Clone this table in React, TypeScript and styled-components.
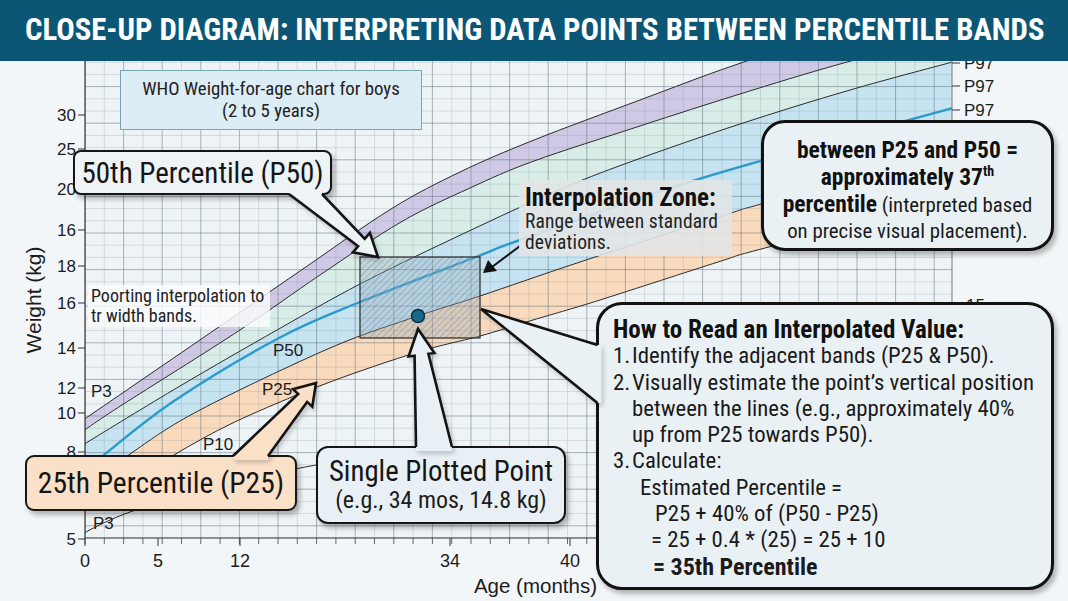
import React from "react";
import styled, { createGlobalStyle, css } from "styled-components";

const NARROW = `"Liberation Sans Narrow", "Roboto Condensed", "DejaVu Sans Condensed", "Liberation Sans", Arial, sans-serif`;
const PLAIN = `"Liberation Sans", Arial, sans-serif`;

// the chart area starts right under the header, svg coords are page coords
const TOP = 61;

type Pt = [number, number];

const GlobalStyle = createGlobalStyle`
    html, body {
        margin: 0;
        padding: 0;
    }
    body {
        background: #f3f6f8;
        font-family: ${NARROW};
        color: #1c1c1c;
    }
`;

// percentile curves, left to right
const curves: Record<string, Pt[]> = {
    l1: [[70, 429], [86, 418], [213, 331], [300, 271], [391, 209], [460, 172], [534, 140], [640, 100], [735, 65], [850, 28], [960, -5]],
    l2: [[70, 440], [86, 429], [122, 405], [240, 330], [320, 275], [401, 222], [470, 188], [534, 161], [640, 126], [740, 94], [840, 64], [960, 32]],
    l3: [[70, 453], [86, 443], [180, 386], [277, 330], [360, 284], [450, 240], [554, 192], [630, 162], [740, 124], [850, 90], [960, 60]],
    p50: [[70, 482], [100, 458], [174, 401], [279, 338], [360, 302], [476, 257], [520, 240], [677, 186], [800, 150], [960, 106]],
    l5: [[70, 500], [133, 452], [200, 410], [330, 348], [418, 316], [480, 296], [580, 262], [728, 214], [765, 203], [960, 150]],
    l6: [[100, 505], [150, 470], [200, 440], [250, 415], [330, 382], [418, 352], [480, 336], [533, 320], [600, 300], [718, 262], [765, 248], [960, 198]],
    l7: [[70, 545], [86, 532], [130, 512], [200, 491], [300, 468], [400, 452]],
};

const segments = (pts: Pt[]) => {
    let d = "";
    for (let i = 0; i < pts.length - 1; i++) {
        const p0 = pts[i - 1] || pts[i];
        const p1 = pts[i];
        const p2 = pts[i + 1];
        const p3 = pts[i + 2] || p2;
        const c1 = [p1[0] + (p2[0] - p0[0]) / 6, p1[1] + (p2[1] - p0[1]) / 6];
        const c2 = [p2[0] - (p3[0] - p1[0]) / 6, p2[1] - (p3[1] - p1[1]) / 6];
        d += ` C${c1[0].toFixed(1)},${c1[1].toFixed(1)} ${c2[0].toFixed(1)},${c2[1].toFixed(1)} ${p2[0]},${p2[1]}`;
    }
    return d;
};

const linePath = (pts: Pt[]) => `M${pts[0][0]},${pts[0][1]}${segments(pts)}`;

const bandPath = (upper: Pt[], lower: Pt[]) => {
    const back = [...lower].reverse();
    return `${linePath(upper)} L${back[0][0]},${back[0][1]}${segments(back)} Z`;
};

// hollow block arrow from a callout edge (b1..b2) to the tip
const arrowPoints = (b1: Pt, b2: Pt, tip: Pt, neck: number, head: number, len: number): Pt[] => {
    if (len === 0) return [b1, tip, b2];
    const mx = (b1[0] + b2[0]) / 2;
    const my = (b1[1] + b2[1]) / 2;
    const L = Math.hypot(tip[0] - mx, tip[1] - my);
    const ux = (tip[0] - mx) / L;
    const uy = (tip[1] - my) / L;
    const nx = -uy;
    const ny = ux;
    const side = Math.sign((b1[0] - mx) * nx + (b1[1] - my) * ny) || 1;
    const cx = tip[0] - ux * len;
    const cy = tip[1] - uy * len;
    const at = (s: number, w: number): Pt => [cx + nx * w * s, cy + ny * w * s];
    return [b1, at(side, neck), at(side, head), tip, at(-side, head), at(-side, neck), b2];
};

const toStr = (pts: Pt[]) => pts.map((p) => `${p[0].toFixed(1)},${p[1].toFixed(1)}`).join(" ");

const yTicks: [string, number][] = [
    ["30", 115], ["25", 149], ["20", 189], ["16", 230], ["18", 266], ["16", 303],
    ["14", 348], ["12", 388], ["10", 413], ["8", 452], ["5", 539],
];

const xTicks: [string, number][] = [["0", 85], ["5", 158], ["12", 240], ["34", 450], ["40", 570]];

const GrowthChart = () => {
    const verticals: { x: number; major: boolean }[] = [];
    for (let i = 0, x = 85; x <= 952; i++, x = 85 + i * 19.3) verticals.push({ x, major: i % 2 === 0 });
    const horizontals: { y: number; major: boolean }[] = [];
    for (let i = 0, y = 538; y >= 61; i++, y = 538 - i * 12.2) horizontals.push({ y, major: i % 3 === 1 });
    const xMinor: number[] = [];
    for (let x = 85; x <= 590; x += 19.3) xMinor.push(x);

    return (
        <Plot viewBox={`0 ${TOP} 1068 540`}>
            <defs>
                <clipPath id="plot-clip">
                    <rect x={85} y={TOP} width={867} height={538 - TOP} />
                </clipPath>
                <pattern id="hatch" width="4.5" height="4.5" patternUnits="userSpaceOnUse" patternTransform="rotate(45)">
                    <line x1="0" y1="0" x2="0" y2="4.5" stroke="rgba(55,75,90,0.45)" strokeWidth="1" />
                </pattern>
            </defs>

            <rect x={85} y={TOP} width={867} height={538 - TOP} fill="#eef3f6" />
            <g clipPath="url(#plot-clip)">
                <path d={bandPath(curves.l1, curves.l2)} fill="#cfc9e5" />
                <path d={bandPath(curves.l2, curves.l3)} fill="#d9ede8" />
                <path d={bandPath(curves.l3, curves.l5)} fill="#c6e3f1" />
                <path d={bandPath(curves.l5, curves.l6)} fill="#f9dabd" />

                {verticals.map((v, i) => (
                    <line key={`v${i}`} x1={v.x} y1={TOP} x2={v.x} y2={538}
                        stroke={v.major ? "#5e707a" : "#7d8f99"} strokeOpacity={v.major ? 0.5 : 0.3} strokeWidth={v.major ? 1 : 0.8} />
                ))}
                {horizontals.map((h, i) => (
                    <line key={`h${i}`} x1={85} y1={h.y} x2={952} y2={h.y}
                        stroke={h.major ? "#5e707a" : "#7d8f99"} strokeOpacity={h.major ? 0.5 : 0.3} strokeWidth={h.major ? 1 : 0.8} />
                ))}

                {["l1", "l2", "l3", "l5", "l6", "l7"].map((k) => (
                    <path key={k} d={linePath(curves[k])} fill="none" stroke="#2b2b2b" strokeWidth={1} />
                ))}
                <path d={linePath(curves.p50)} fill="none" stroke="#2a9bcd" strokeWidth={2.4} />
            </g>

            <line x1={85} y1={TOP} x2={85} y2={538} stroke="#333" strokeWidth={1.2} />
            <line x1={85} y1={538} x2={952} y2={538} stroke="#333" strokeWidth={1.2} />
            <line x1={952} y1={TOP} x2={952} y2={538} stroke="#6f7b82" strokeWidth={1} />

            <g fontFamily={PLAIN} fontSize={17} fill="#1c1c1c">
                {yTicks.map(([t, y], i) => (
                    <g key={`y${i}`}>
                        <line x1={78} y1={y} x2={85} y2={y} stroke="#333" />
                        <text x={76} y={y} textAnchor="end" dominantBaseline="central">{t}</text>
                    </g>
                ))}
                {xMinor.map((x, i) => (
                    <line key={`xm${i}`} x1={x} y1={538} x2={x} y2={544} stroke="#444" strokeWidth={0.8} />
                ))}
                {xTicks.map(([t, x], i) => (
                    <g key={`x${i}`}>
                        <line x1={x} y1={538} x2={x} y2={546} stroke="#333" />
                        <text x={x} y={561} textAnchor="middle" dominantBaseline="central" fontSize={18}>{t}</text>
                    </g>
                ))}
                {[63, 86, 110].map((y) => (
                    <g key={`p97${y}`}>
                        <line x1={952} y1={y} x2={960} y2={y} stroke="#333" />
                        <text x={964} y={y} dominantBaseline="central">P97</text>
                    </g>
                ))}
                <text x={966} y={305} dominantBaseline="central">15</text>

                <text x={91} y={391} dominantBaseline="central">P3</text>
                <text x={273} y={350} dominantBaseline="central">P50</text>
                <text x={262} y={389} dominantBaseline="central">P25</text>
                <text x={203} y={444} dominantBaseline="central">P10</text>
                <text x={93} y={523} dominantBaseline="central">P3</text>

                <text x={33} y={300} fontSize={21} textAnchor="middle" dominantBaseline="central" transform="rotate(-90 33 300)">Weight (kg)</text>
                <text x={597} y={585} fontSize={20.5} textAnchor="end" dominantBaseline="central">Age (months)</text>
            </g>

            <rect x={360} y={257} width={120} height={81} fill="rgba(150,172,188,0.35)" />
            <rect x={360} y={257} width={120} height={81} fill="url(#hatch)" stroke="#333" strokeWidth={1.3} />
            <circle cx={418} cy={316} r={6.5} fill="#17688a" stroke="#0c3244" strokeWidth={1.5} />

            <line x1={520} y1={246} x2={492} y2={267} stroke="#111" strokeWidth={2} />
            <polygon points="483,273 488,260 497,271" fill="#111" />
        </Plot>
    );
};

type PointerSpec = { b1: Pt; b2: Pt; inward: Pt; tip: Pt; neck: number; head: number; len: number; fill: string };

const pointers: PointerSpec[] = [
    { b1: [289, 194], b2: [322, 194], inward: [0, -4], tip: [378, 257], neck: 5, head: 13, len: 22, fill: "#eef3f6" },
    { b1: [233, 456], b2: [268, 456], inward: [0, 4], tip: [316, 383], neck: 6, head: 13, len: 20, fill: "#fbe0c8" },
    { b1: [416, 447], b2: [452, 447], inward: [0, 4], tip: [418, 329], neck: 7, head: 13, len: 26, fill: "#e8f0f5" },
    { b1: [597.5, 345], b2: [597.5, 403], inward: [4, 0], tip: [481, 309], neck: 0, head: 0, len: 0, fill: "#eaf1f5" },
];

const Pointers = () => (
    <PointerLayer viewBox={`0 ${TOP} 1068 540`}>
        {pointers.map((p, i) => {
            const outline = arrowPoints(p.b1, p.b2, p.tip, p.neck, p.head, p.len);
            const fillPts: Pt[] = [
                [p.b1[0] + p.inward[0], p.b1[1] + p.inward[1]],
                ...outline,
                [p.b2[0] + p.inward[0], p.b2[1] + p.inward[1]],
            ];
            return (
                <g key={i}>
                    <polygon points={toStr(fillPts)} fill={p.fill} />
                    <polyline points={toStr(outline)} fill="none" stroke="#141414" strokeWidth={2.6} strokeLinejoin="miter" />
                </g>
            );
        })}
    </PointerLayer>
);

export default function App() {
    return (
        <>
            <GlobalStyle />
            <Page>
                <Header>
                    <Title>CLOSE-UP DIAGRAM: INTERPRETING DATA POINTS BETWEEN PERCENTILE BANDS</Title>
                </Header>
                <ChartArea>
                    <GrowthChart />

                    <ChartCaption>
                        <span>WHO Weight-for-age chart for boys</span>
                        <span>(2 to 5 years)</span>
                    </ChartCaption>

                    <BandNote>
                        Poorting interpolation to
                        <br />
                        tr width bands.
                    </BandNote>

                    <ZoneLabel>
                        <ZoneTitle>Interpolation Zone:</ZoneTitle>
                        <ZoneText>Range between standard</ZoneText>
                        <ZoneText>deviations.</ZoneText>
                    </ZoneLabel>

                    <PercentileTag $tone="p50">50th Percentile (P50)</PercentileTag>
                    <PercentileTag $tone="p25">25th Percentile (P25)</PercentileTag>

                    <PointTag>
                        <PointTitle>Single Plotted Point</PointTitle>
                        <PointText>(e.g., 34 mos, 14.8 kg)</PointText>
                    </PointTag>

                    <ResultBox>
                        <strong>between P25 and P50 =</strong>
                        <br />
                        <strong>
                            approximately 37<Sup>th</Sup>
                        </strong>
                        <br />
                        <strong>percentile</strong> (interpreted based
                        <br />
                        on precise visual placement).
                    </ResultBox>

                    <StepsBox>
                        <StepsHeading>How to Read an Interpolated Value:</StepsHeading>
                        <Step>
                            <StepNum>1.</StepNum>
                            <span>Identify the adjacent bands (P25 &amp; P50).</span>
                        </Step>
                        <Step>
                            <StepNum>2.</StepNum>
                            <span>
                                Visually estimate the point’s vertical position
                                <br />
                                between the lines (e.g., approximately 40%
                                <br />
                                up from P25 towards P50).
                            </span>
                        </Step>
                        <Step>
                            <StepNum>3.</StepNum>
                            <span>Calculate:</span>
                        </Step>
                        <FormulaLine $indent={27}>Estimated Percentile =</FormulaLine>
                        <FormulaLine $indent={42}>P25 + 40% of (P50 - P25)</FormulaLine>
                        <FormulaLine $indent={38}>= 25 + 0.4 * (25) = 25 + 10</FormulaLine>
                        <FormulaLine $indent={40} $bold>= 35th Percentile</FormulaLine>
                    </StepsBox>

                    <Pointers />
                </ChartArea>
            </Page>
        </>
    );
}

const Page = styled.div`
    width: 1068px;
    height: 601px;
    display: flex;
    flex-direction: column;
    overflow: hidden;
    background: #f3f6f8;
`;

const Header = styled.header`
    flex: none;
    height: 61px;
    box-sizing: border-box;
    padding-left: 25px;
    display: flex;
    align-items: center;
    background: #0c5675;
    position: relative;
    z-index: 2;
`;

const Title = styled.h1`
    margin: 0;
    color: #ffffff;
    font-family: ${NARROW};
    font-weight: 700;
    font-size: 30.7px;
    line-height: 1;
    white-space: nowrap;
`;

const ChartArea = styled.main`
    position: relative;
    flex: 1;
`;

const Plot = styled.svg`
    display: block;
    width: 1068px;
    height: 540px;
`;

const PointerLayer = styled.svg`
    position: absolute;
    inset: 0;
    width: 1068px;
    height: 540px;
    pointer-events: none;
    filter: drop-shadow(2px 3px 2px rgba(0, 0, 0, 0.18));
`;

const shadow = css`
    box-shadow: 3px 4px 5px rgba(0, 0, 0, 0.28);
`;

const ChartCaption = styled.div`
    position: absolute;
    left: 120px;
    top: ${70 - TOP}px;
    width: 302px;
    height: 60px;
    box-sizing: border-box;
    display: flex;
    flex-direction: column;
    align-items: center;
    justify-content: center;
    background: #dcedf5;
    border: 1.5px solid #76a5b7;
    font-size: 18.8px;
    line-height: 22px;
    color: #222;
`;

const BandNote = styled.div`
    position: absolute;
    left: 88px;
    top: ${285 - TOP}px;
    width: 182px;
    height: 42px;
    box-sizing: border-box;
    padding: 1px 3px;
    background: rgba(250, 251, 252, 0.82);
    font-size: 18px;
    line-height: 20px;
    color: #222;
    white-space: nowrap;
`;

const ZoneLabel = styled.div`
    position: absolute;
    left: 519px;
    top: ${180 - TOP}px;
    width: 213px;
    height: 76px;
    box-sizing: border-box;
    padding: 4px 6px;
    background: rgba(226, 228, 230, 0.9);
    white-space: nowrap;
`;

const ZoneTitle = styled.div`
    font-weight: 700;
    font-size: 25px;
    line-height: 27px;
    color: #111;
`;

const ZoneText = styled.div`
    font-size: 19.5px;
    line-height: 21px;
    letter-spacing: 0.15px;
    color: #222;
`;

const PercentileTag = styled.div<{ $tone: "p50" | "p25" }>`
    position: absolute;
    box-sizing: border-box;
    display: flex;
    align-items: center;
    justify-content: center;
    border: 2.5px solid #161616;
    color: #151515;
    white-space: nowrap;
    ${shadow};
    ${(p) =>
        p.$tone === "p50"
            ? css`
                  left: 73px;
                  top: ${150 - TOP}px;
                  width: 259px;
                  height: 45px;
                  border-radius: 8px;
                  background: #eef3f6;
                  font-size: 29px;
              `
            : css`
                  left: 25px;
                  top: ${455 - TOP}px;
                  width: 272px;
                  height: 56px;
                  border-radius: 9px;
                  background: #fbe0c8;
                  font-size: 29.5px;
              `}
`;

const PointTag = styled.div`
    position: absolute;
    left: 316px;
    top: ${446 - TOP}px;
    width: 250px;
    height: 78px;
    box-sizing: border-box;
    display: flex;
    flex-direction: column;
    align-items: center;
    justify-content: center;
    border: 2.5px solid #161616;
    border-radius: 12px;
    background: #e8f0f5;
    white-space: nowrap;
    ${shadow};
`;

const PointTitle = styled.div`
    font-size: 28.8px;
    line-height: 31px;
    color: #151515;
`;

const PointText = styled.div`
    font-size: 24px;
    line-height: 27px;
    color: #1c1c1c;
`;

const ResultBox = styled.div`
    position: absolute;
    left: 761px;
    top: ${120 - TOP}px;
    width: 293px;
    height: 131px;
    box-sizing: border-box;
    padding-top: 14px;
    border: 3px solid #121212;
    border-radius: 24px;
    background: #eaf1f5;
    text-align: center;
    font-size: 20.8px;
    line-height: 26px;
    color: #1a1a1a;
    white-space: nowrap;
    ${shadow};

    strong {
        font-size: 23.5px;
        color: #111;
    }
`;

const Sup = styled.sup`
    font-size: 14px;
    line-height: 0;
    vertical-align: 9px;
`;

const StepsBox = styled.div`
    position: absolute;
    left: 596px;
    top: ${302 - TOP}px;
    width: 458px;
    height: 288px;
    box-sizing: border-box;
    padding: 12px 14px 0;
    border: 3px solid #121212;
    border-radius: 26px;
    background: #eaf1f5;
    font-size: 22.8px;
    line-height: 26.3px;
    color: #1a1a1a;
    ${shadow};
`;

const StepsHeading = styled.div`
    font-weight: 700;
    font-size: 25px;
    color: #111;
    white-space: nowrap;
`;

const Step = styled.div`
    display: grid;
    grid-template-columns: 19px 1fr;
    white-space: nowrap;
`;

const StepNum = styled.span`
    display: block;
`;

const FormulaLine = styled.div<{ $indent: number; $bold?: boolean }>`
    padding-left: ${(p) => p.$indent}px;
    white-space: nowrap;
    font-weight: ${(p) => (p.$bold ? 700 : 400)};
    font-size: ${(p) => (p.$bold ? 24 : 22.8)}px;
`;
